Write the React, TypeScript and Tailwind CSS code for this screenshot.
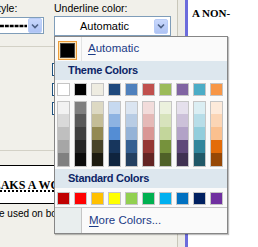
import React from 'react';

const themeTop = ['#FFFFFF', '#000000', '#EEECE1', '#1F497D', '#4F81BD', '#C0504D', '#9BBB59', '#8064A2', '#4BACC6', '#F79646'];

const tints = [
  ['#F2F2F2', '#D9D9D9', '#BFBFBF', '#A6A6A6', '#808080'],
  ['#7F7F7F', '#595959', '#3F3F3F', '#262626', '#0C0C0C'],
  ['#DDD9C3', '#C4BD97', '#938953', '#494429', '#1D1B10'],
  ['#C6D9F0', '#8DB3E2', '#548DD4', '#17365D', '#0F243E'],
  ['#DBE5F1', '#B8CCE4', '#95B3D7', '#366092', '#244061'],
  ['#F2DCDB', '#E5B9B7', '#D99694', '#953734', '#632423'],
  ['#EBF1DD', '#D7E3BC', '#C3D69B', '#76923C', '#4F6128'],
  ['#E5E0EC', '#CCC1D9', '#B2A2C7', '#5F497A', '#3F3151'],
  ['#DBEEF3', '#B7DDE8', '#92CDDC', '#31859B', '#205867'],
  ['#FDEADA', '#FBD5B5', '#FAC08F', '#E36C09', '#974806'],
];

const standard = ['#C00000', '#FF0000', '#FFC000', '#FFFF00', '#92D050', '#00B050', '#00B0F0', '#0070C0', '#002060', '#7030A0'];

// little blue XP-style drop button
const DropButton = () => (
  <div className="w-[14px] h-[15px] rounded-[2px] border border-[#b8ccf7] bg-gradient-to-b from-[#c9d8fc] to-[#aec3f4] flex items-center justify-center">
    <svg width="8" height="6" viewBox="0 0 8 6">
      <path d="M1 1.5 L4 4.5 L7 1.5" fill="none" stroke="#4d6185" strokeWidth="1.6" />
    </svg>
  </div>
);

const Swatch = ({ color }: { color: string }) => (
  <div className="w-[13px] h-[13px] border border-[#c5c5c5]" style={{ backgroundColor: color }} />
);

const TintColumn = ({ colors }: { colors: string[] }) => (
  <div className="w-[13px] border border-[#c5c5c5] flex flex-col">
    {colors.map((c, i) => (
      <div key={i} className={i === 0 ? 'h-[12px]' : 'h-[13px]'} style={{ backgroundColor: c }} />
    ))}
  </div>
);

const SectionHeader = ({ label }: { label: string }) => (
  <div className="h-[19px] bg-[#dde7ee] pl-[13px] flex items-center text-[11px] font-bold tracking-[-0.3px] text-[#0c2566]">
    {label}
  </div>
);

const ColorPopup = () => (
  <div className="absolute left-[54px] top-[36px] w-[174px] h-[198px] border border-[#868686] bg-[#fafafa] shadow-[1px_1px_1px_rgba(0,0,0,0.25)] flex flex-col">
    {/* Automatic */}
    <div className="h-[24px] flex">
      <div className="w-[27px] border-r border-[#e2e3e3] pl-[3px] pt-[4px]">
        <div className="w-[19px] h-[19px] border border-[#eb9c3a] bg-[#fde3b4] p-px">
          <div className="w-full h-full bg-black border border-[#444]" />
        </div>
      </div>
      <div className="pl-[6px] flex items-center text-[11.5px] text-[#1b3b86]">
        <span className="underline underline-offset-[2px]">A</span>utomatic
      </div>
    </div>

    <SectionHeader label="Theme Colors" />

    <div className="mt-[3px] pl-[2px] flex gap-[4px]">
      {themeTop.map((c) => (
        <Swatch key={c} color={c} />
      ))}
    </div>

    <div className="mt-[5px] pl-[2px] flex gap-[4px]">
      {tints.map((col, i) => (
        <TintColumn key={i} colors={col} />
      ))}
    </div>

    <div className="mt-[2px]">
      <SectionHeader label="Standard Colors" />
    </div>

    <div className="mt-[4px] pl-[2px] flex gap-[4px]">
      {standard.map((c) => (
        <Swatch key={c} color={c} />
      ))}
    </div>

    <div className="mt-[2px] h-px bg-[#c5c5c5]" />

    {/* More Colors */}
    <div className="flex-1 flex">
      <div className="w-[27px] bg-[#e9eeee] border-r border-[#c5c5c5]" />
      <div className="pl-[7px] flex items-center text-[11.5px] text-[#1b3b86]">
        <span className="underline underline-offset-[2px]">M</span>ore Colors...
      </div>
    </div>
  </div>
);

const CheckEdge = ({ mt }: { mt: string }) => (
  <div className={`${mt} ml-[52px] w-[13px] h-[13px] border border-[#1c5180] bg-white`} />
);

export default function App() {
  return (
    <div className="w-[258px] h-[247px] relative overflow-hidden flex bg-white font-['Liberation_Sans',Arial,sans-serif]">
      {/* dialog */}
      <div className="w-[177px] shrink-0 bg-[#f1f0ea] flex flex-col">
        <div className="flex pt-[2px] h-[16px] text-[10.5px] leading-[13px] text-black">
          <div className="w-[54px] overflow-hidden">
            <span className="block ml-[-55px] whitespace-nowrap">Underline style:</span>
          </div>
          <div className="whitespace-nowrap">Underline color:</div>
        </div>

        <div className="flex items-start">
          <div className="mt-[1px] w-[44px] h-[17px] bg-white border-y border-r border-[#7f9db9] flex items-center justify-end pr-px">
            <svg width="28" height="6" viewBox="0 0 28 6" className="mr-[1px]">
              <path d="M0 3 L28 3" stroke="#000" strokeWidth="2.4" strokeDasharray="4 1" />
            </svg>
            <DropButton />
          </div>
          <div className="ml-[10px] w-[117px] h-[20px] bg-white border border-[#7f9db9] flex items-center pr-[2px]">
            <div className="flex-1 text-center text-[11px] text-black">Automatic</div>
            <DropButton />
          </div>
        </div>

        <div className="mt-[10px] w-[54px] h-px bg-[#d3d1c6]" />

        <CheckEdge mt="mt-[16px]" />
        <CheckEdge mt="mt-[7px]" />
        <CheckEdge mt="mt-[6px]" />

        <div className="mt-[35px] w-[54px] h-px bg-[#d3d1c6]" />

        <div className="mt-[14px] w-[54px] h-[39px] bg-white border-y border-black overflow-hidden flex items-center">
          <span className="ml-[-24px] whitespace-nowrap font-['Liberation_Serif',serif] font-bold text-[12px] underline decoration-dotted decoration-2 underline-offset-[2px]">
            BREAKS A WORD
          </span>
        </div>

        <div className="mt-[3px] w-[54px] overflow-hidden">
          <span className="block ml-[-1px] whitespace-nowrap text-[10px] leading-[14px] text-black">e used on both</span>
        </div>
      </div>

      {/* window edge */}
      <div className="w-[8px] shrink-0 border-l border-[#c9c7ba] bg-[#ecebe4]" />
      <div className="w-[3px] shrink-0 bg-[#6c6cdc]" />

      {/* document */}
      <div className="flex-1 bg-white pl-[4px] pt-[8px]">
        <div className="font-['Liberation_Serif',serif] font-bold text-[11px] leading-[11px] text-black whitespace-nowrap">
          A NON-
        </div>
      </div>

      <ColorPopup />
    </div>
  );
}
